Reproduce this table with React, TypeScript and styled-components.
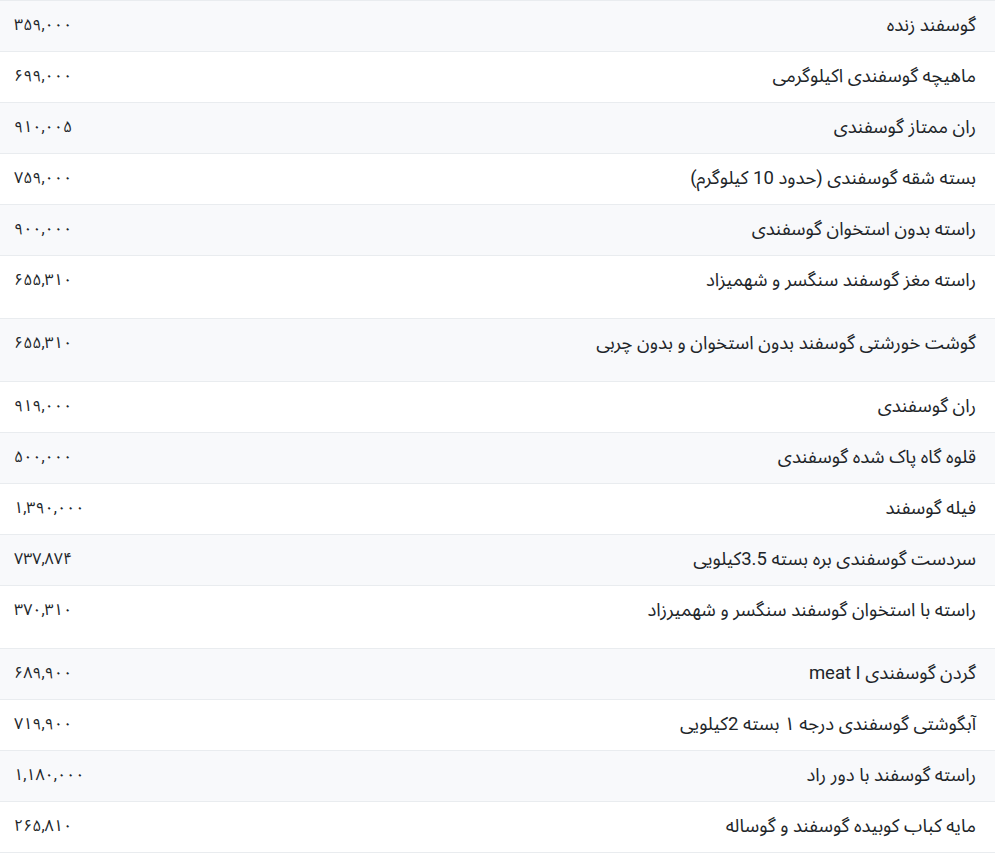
import React from "react";
import styled, { createGlobalStyle } from "styled-components";

const GlobalStyle = createGlobalStyle`
  html, body { margin: 0; padding: 0; background: #ffffff; }
  body {
    font-family: Roboto, "Noto Sans Arabic", "DejaVu Sans", sans-serif;
    color: #212529;
  }
`;

const Table = styled.div`
  direction: rtl;
  width: 995px;
  border-top: 1px solid #e9ecef;
`;

const Row = styled.div<{ $striped: boolean; $tall: boolean }>`
  display: flex;
  justify-content: space-between;
  align-items: flex-start;
  box-sizing: border-box;
  height: ${(p) => (p.$tall ? 63 : 51)}px;
  padding: 12px 19px 0 14px;
  border-bottom: 1px solid #e9ecef;
  background: ${(p) => (p.$striped ? "#f8f9fb" : "#ffffff")};
  line-height: 24px;
`;

const Name = styled.span`
  text-align: right;
  font-size: 18.5px;
`;

const Price = styled.span`
  direction: ltr;
  text-align: left;
  font-size: 16px;
`;

const items: { name: string; price: string; tall?: boolean }[] = [
  { name: "گوسفند زنده", price: "۳۵۹,۰۰۰" },
  { name: "ماهیچه گوسفندی اکیلوگرمی", price: "۶۹۹,۰۰۰" },
  { name: "ران ممتاز گوسفندی", price: "۹۱۰,۰۰۵" },
  { name: "بسته شقه گوسفندی (حدود 10 کیلوگرم)", price: "۷۵۹,۰۰۰" },
  { name: "راسته بدون استخوان گوسفندی", price: "۹۰۰,۰۰۰" },
  { name: "راسته مغز گوسفند سنگسر و شهمیزاد", price: "۶۵۵,۳۱۰", tall: true },
  { name: "گوشت خورشتی گوسفند بدون استخوان و بدون چربی", price: "۶۵۵,۳۱۰", tall: true },
  { name: "ران گوسفندی", price: "۹۱۹,۰۰۰" },
  { name: "قلوه گاه پاک شده گوسفندی", price: "۵۰۰,۰۰۰" },
  { name: "فیله گوسفند", price: "۱,۳۹۰,۰۰۰" },
  { name: "سردست گوسفندی بره بسته 3.5کیلویی", price: "۷۳۷,۸۷۴" },
  { name: "راسته با استخوان گوسفند سنگسر و شهمیرزاد", price: "۳۷۰,۳۱۰", tall: true },
  { name: "گردن گوسفندی meat I", price: "۶۸۹,۹۰۰" },
  { name: "آبگوشتی گوسفندی درجه ۱ بسته 2کیلویی", price: "۷۱۹,۹۰۰" },
  { name: "راسته گوسفند با دور راد", price: "۱,۱۸۰,۰۰۰" },
  { name: "مایه کباب کوبیده گوسفند و گوساله", price: "۲۶۵,۸۱۰" },
];

export default function App() {
  return (
    <>
      <GlobalStyle />
      <Table>
        {items.map((it, i) => (
          <Row key={i} $striped={i % 2 === 0} $tall={!!it.tall}>
            <Name>{it.name}</Name>
            <Price>{it.price}</Price>
          </Row>
        ))}
      </Table>
    </>
  );
}
